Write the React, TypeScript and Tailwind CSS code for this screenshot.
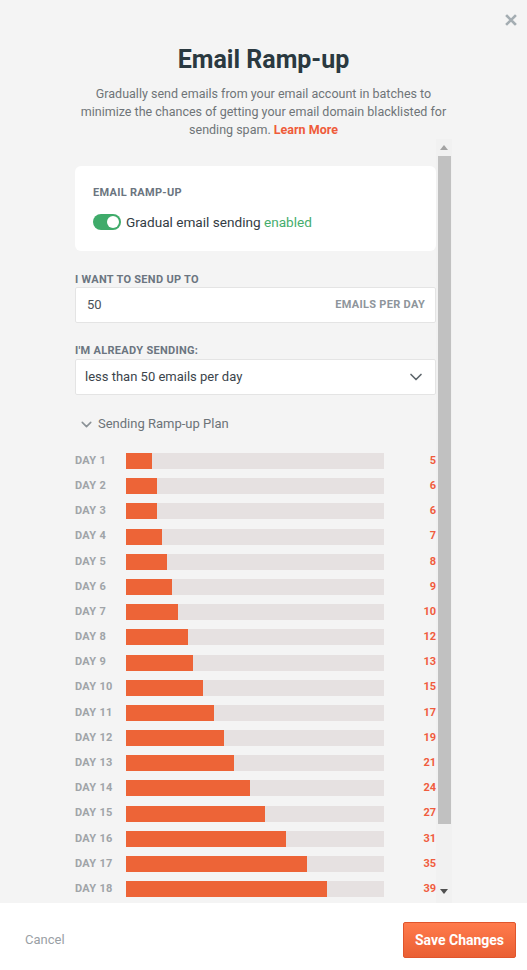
import { ChevronDown } from "lucide-react";

const plan = [5, 6, 6, 7, 8, 9, 10, 12, 13, 15, 17, 19, 21, 24, 27, 31, 35, 39, 44, 50];

export default function App() {
  return (
    <div className="w-[527px] h-[970px] bg-[#f4f4f4] flex flex-col font-['Roboto',sans-serif] relative overflow-hidden">
      {/* Close */}
      <button className="absolute top-[14px] right-[10px] w-[12px] h-[12px] text-[#a4adb2]">
        <svg viewBox="0 0 12 12" className="w-full h-full">
          <path d="M2 2 L10 10 M10 2 L2 10" stroke="currentColor" strokeWidth="2.6" strokeLinecap="square" />
        </svg>
      </button>

      {/* Header */}
      <div className="pt-[44px] flex flex-col items-center text-center">
        <h1 className="text-[25px] leading-[32px] font-bold text-[#2a3940]">Email Ramp-up</h1>
        <p className="mt-[9px] w-[380px] text-[12.5px] leading-[18px] text-[#6f7478]">
          Gradually send emails from your email account in batches to minimize the chances of getting your email domain blacklisted for sending spam.{" "}
          <span className="text-[#ef5b3a] font-bold">Learn More</span>
        </p>
      </div>

      {/* Scroll area */}
      <div className="ml-[75px] w-[377px] h-[764px] flex">
        <div className="flex-1 overflow-hidden pt-[27px]">
          {/* Card */}
          <div className="bg-white rounded-[6px] px-[18px] pt-[20px] pb-[20px]">
            <p className="text-[11px] leading-[14px] font-bold tracking-[0.3px] text-[#6b7580] uppercase">Email Ramp-up</p>
            <div className="mt-[13px] flex items-center gap-[5px]">
              <span className="w-[28px] h-[16px] rounded-full bg-[#3fab6a] flex items-center justify-end pr-[2px]">
                <span className="w-[12px] h-[12px] rounded-full bg-white" />
              </span>
              <span className="text-[13.6px] leading-[18px] text-[#333c44]">
                Gradual email sending <span className="text-[#45ad6d]">enabled</span>
              </span>
            </div>
          </div>

          {/* Send up to */}
          <p className="mt-[22px] text-[11px] leading-[14px] font-bold tracking-[0.3px] text-[#6b7580] uppercase">I want to send up to</p>
          <div className="h-[36px] bg-white border border-[#e4e4e4] rounded-[2px] flex items-center justify-between pl-[11px] pr-[10px]">
            <span className="text-[13px] text-[#4a5259]">50</span>
            <span className="text-[11px] font-bold tracking-[0.3px] text-[#8e959b] uppercase">Emails per day</span>
          </div>

          {/* Already sending */}
          <p className="mt-[21px] text-[11px] leading-[14px] font-bold tracking-[0.3px] text-[#6b7580] uppercase">I'm already sending:</p>
          <div className="mt-[1px] h-[36px] bg-white border border-[#e4e4e4] rounded-[2px] flex items-center justify-between pl-[9px] pr-[9px]">
            <span className="text-[13px] text-[#3b444b]">less than 50 emails per day</span>
            <ChevronDown size={20} strokeWidth={2} className="text-[#5e666c]" />
          </div>

          {/* Plan toggle */}
          <div className="mt-[20px] ml-[3px] flex items-center gap-[3px] text-[#6c7378]">
            <ChevronDown size={17} strokeWidth={2.2} className="text-[#8a9196]" />
            <span className="text-[13px] leading-[18px]">Sending Ramp-up Plan</span>
          </div>

          {/* Bars */}
          <div className="mt-[20px] flex flex-col gap-[9.2px]">
            {plan.map((v, i) => (
              <div key={i} className="flex items-center h-[16px]">
                <span className="w-[51px] text-[11px] font-bold tracking-[0.3px] text-[#a0a4a8]">DAY {i + 1}</span>
                <div className="w-[258px] h-[16px] bg-[#e6e1e1]">
                  <div className="h-full bg-[#ed6437]" style={{ width: `${(v / 50) * 100}%` }} />
                </div>
                <span className="flex-1 text-right text-[11px] font-bold text-[#f05c3e]">{v}</span>
              </div>
            ))}
          </div>
        </div>

        {/* Scrollbar */}
        <div className="w-[16px] bg-[#f1f1f1] flex flex-col items-center">
          <div className="h-[17px] flex items-center justify-center">
            <svg viewBox="0 0 8 5" className="w-[8px] h-[5px]">
              <path d="M0 5 L4 0 L8 5 Z" fill="#a3a3a3" />
            </svg>
          </div>
          <div className="w-[13px] h-[668px] bg-[#c1c1c1]" />
          <div className="flex-1 flex items-end justify-center pb-[9px]">
            <svg viewBox="0 0 8 5" className="w-[8px] h-[5px]">
              <path d="M0 0 L8 0 L4 5 Z" fill="#505050" />
            </svg>
          </div>
        </div>
      </div>

      {/* Footer */}
      <div className="flex-1 bg-white flex items-center justify-between pt-[7px] pl-[25px] pr-[11px]">
        <span className="text-[13px] text-[#9aa0a5]">Cancel</span>
        <button className="w-[113px] h-[36px] rounded-[2px] border border-[#e0552c] bg-gradient-to-b from-[#ff7b4c] to-[#ea5f33] text-white text-[14px] font-bold">
          Save Changes
        </button>
      </div>
    </div>
  );
}
